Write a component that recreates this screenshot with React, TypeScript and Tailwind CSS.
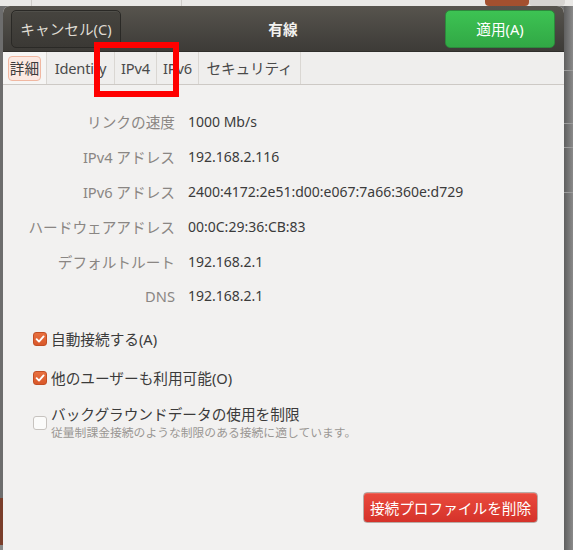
import React from 'react';

const rows: { label: string; value: string }[] = [
  { label: 'リンクの速度', value: '1000 Mb/s' },
  { label: 'IPv4 アドレス', value: '192.168.2.116' },
  { label: 'IPv6 アドレス', value: '2400:4172:2e51:d00:e067:7a66:360e:d729' },
  { label: 'ハードウェアアドレス', value: '00:0C:29:36:CB:83' },
  { label: 'デフォルトルート', value: '192.168.2.1' },
  { label: 'DNS', value: '192.168.2.1' },
];

const tabs: { label: string; width: string }[] = [
  { label: '詳細', width: 'w-[44px]' },
  { label: 'Identity', width: 'w-[68px]' },
  { label: 'IPv4', width: 'w-[42px]' },
  { label: 'IPv6', width: 'w-[42px]' },
  { label: 'セキュリティ', width: 'w-[102px]' },
];

const CheckBox = ({ checked }: { checked: boolean }) =>
  checked ? (
    <span className="w-[14px] h-[14px] rounded-[3px] bg-gradient-to-b from-[#e8703f] to-[#d9582a] border border-[#c24e24] flex items-center justify-center shrink-0">
      <svg width="10" height="10" viewBox="0 0 10 10">
        <path d="M1.6 5.2 L4 7.6 L8.6 2.4" fill="none" stroke="#fff" strokeWidth="1.9" strokeLinecap="round" strokeLinejoin="round" />
      </svg>
    </span>
  ) : (
    <span className="w-[14px] h-[14px] rounded-[3px] bg-[#fbfbfa] border border-[#c7c3bf] shrink-0" />
  );

export default function App() {
  return (
    <div className="relative w-[573px] h-[550px] overflow-hidden flex flex-col bg-[#707070] font-['Noto_Sans','Noto_Sans_CJK_JP',sans-serif]">
      {/* background app strip */}
      <div className="h-[6px] flex bg-[#e9e8e6] shrink-0">
        <div className="w-[32px] border-r border-[#cfcdca]" />
        <div className="w-[150px] border-r border-[#cfcdca]" />
        <div className="flex-1" />
        <div className="w-[44px] bg-[#a3502f] rounded-b-[4px]" />
        <div className="w-[36px] bg-[#d6d4d1] rounded-b-[4px] mr-[8px]" />
      </div>

      <div className="flex flex-1 min-h-0">
        <div className="w-[3px] flex flex-col">
          <div className="h-[492px] bg-[#6d6d6d]" />
          <div className="h-[47px] bg-[#7a3e2b]" />
          <div className="flex-1 bg-[#8a8a8a]" />
        </div>

        {/* dialog */}
        <div className="w-[561px] flex flex-col bg-[#f2f1f0] rounded-t-[7px] overflow-hidden">
          <div className="h-[46px] shrink-0 flex items-center pl-[8px] pr-[9px] bg-gradient-to-b from-[#57544e] to-[#3d3b37] border-b border-[#2f2e2b]">
            <button className="w-[110px] h-[38px] rounded-[5px] border border-[#2a2926] bg-gradient-to-b from-[#46443f] to-[#3b3935] text-[#dfdbd2] text-[14.67px] shadow-[inset_0_1px_0_rgba(255,255,255,0.06)]">
              キャンセル(C)
            </button>
            <div className="flex-1 text-center text-[#f2f1ef] text-[14.67px] font-bold">有線</div>
            <button className="w-[110px] h-[38px] rounded-[5px] border border-[#2c8a3c] bg-gradient-to-b from-[#3dc353] to-[#31a845] text-white text-[14.67px]">
              適用(A)
            </button>
          </div>

          {/* tabs */}
          <div className="h-[33px] shrink-0 flex items-stretch bg-[#efeeed] border-b border-[#cdc9c5]">
            {tabs.map((t, i) => (
              <div
                key={t.label}
                className={`${t.width} flex items-center justify-center border-r border-[#dad7d3] text-[14.67px] whitespace-nowrap ${
                  i === 0 ? 'bg-[#f6f5f4] text-[#3c3c3c]' : 'text-[#4a4a4a]'
                }`}
              >
                {i === 0 ? (
                  <span className="px-[1px] h-[25px] flex items-center rounded-[4px] border border-[#f0b7a1] bg-[#fbe9e2]">{t.label}</span>
                ) : (
                  <span className="tracking-[-0.2px]">{t.label}</span>
                )}
              </div>
            ))}
          </div>

          {/* details */}
          <div className="pt-[19px] grid grid-cols-[172px_1fr] gap-x-[13px]">
            {rows.map((r, i) => (
              <React.Fragment key={r.label}>
                <div className={`${i === 5 ? 'h-[33px]' : 'h-[35px]'} flex items-center justify-end text-[14.67px] text-[#8a8683]`}>{r.label}</div>
                <div className={`${i === 5 ? 'h-[33px]' : 'h-[35px]'} flex items-center text-[14px] text-[#3b3b3b]`}>{r.value}</div>
              </React.Fragment>
            ))}
          </div>

          <div className="pl-[30px] mt-[14px] flex flex-col">
            <label className="h-[26px] flex items-center gap-[4px] text-[14.67px] text-[#3b3b3b]">
              <CheckBox checked />
              自動接続する(A)
            </label>
            <label className="mt-[13px] h-[26px] flex items-center gap-[4px] text-[14.67px] text-[#3b3b3b]">
              <CheckBox checked />
              他のユーザーも利用可能(O)
            </label>
            <div className="mt-[13px] flex items-center gap-[4px]">
              <CheckBox checked={false} />
              <div className="flex flex-col">
                <span className="text-[14.67px] leading-[20px] text-[#3b3b3b]">バックグラウンドデータの使用を制限</span>
                <span className="text-[11.8px] leading-[17px] text-[#9a9794]">従量制課金接続のような制限のある接続に適しています。</span>
              </div>
            </div>
          </div>

          <div className="flex-1" />
          <div className="flex justify-end pr-[26px] pb-[27px]">
            <button className="w-[175px] h-[31px] rounded-[4px] border border-[#b8aba6] bg-gradient-to-b from-[#ea4a3d] to-[#d5322a] text-white text-[14.67px] shadow-[inset_0_1px_0_rgba(255,255,255,0.15)]">
              接続プロファイルを削除
            </button>
          </div>
        </div>

        {/* right background */}
        <div className="flex-1 flex flex-col bg-gradient-to-r from-[#5f5f5f] to-[#8a8a8a]">
          <div className="h-[64px]" />
          <div className="h-[1px] bg-[#9b9b9b]" />
          <div className="h-[52px]" />
          <div className="h-[1px] bg-[#9b9b9b]" />
          <div className="h-[23px]" />
          <div className="h-[1px] bg-[#9b9b9b]" />
          <div className="h-[44px]" />
          <div className="h-[1px] bg-[#9b9b9b]" />
        </div>
      </div>

      {/* annotation */}
      <div className="absolute left-[94px] top-[42px] w-[85px] h-[55px] border-[6px] border-[#ff0000]" />
    </div>
  );
}
